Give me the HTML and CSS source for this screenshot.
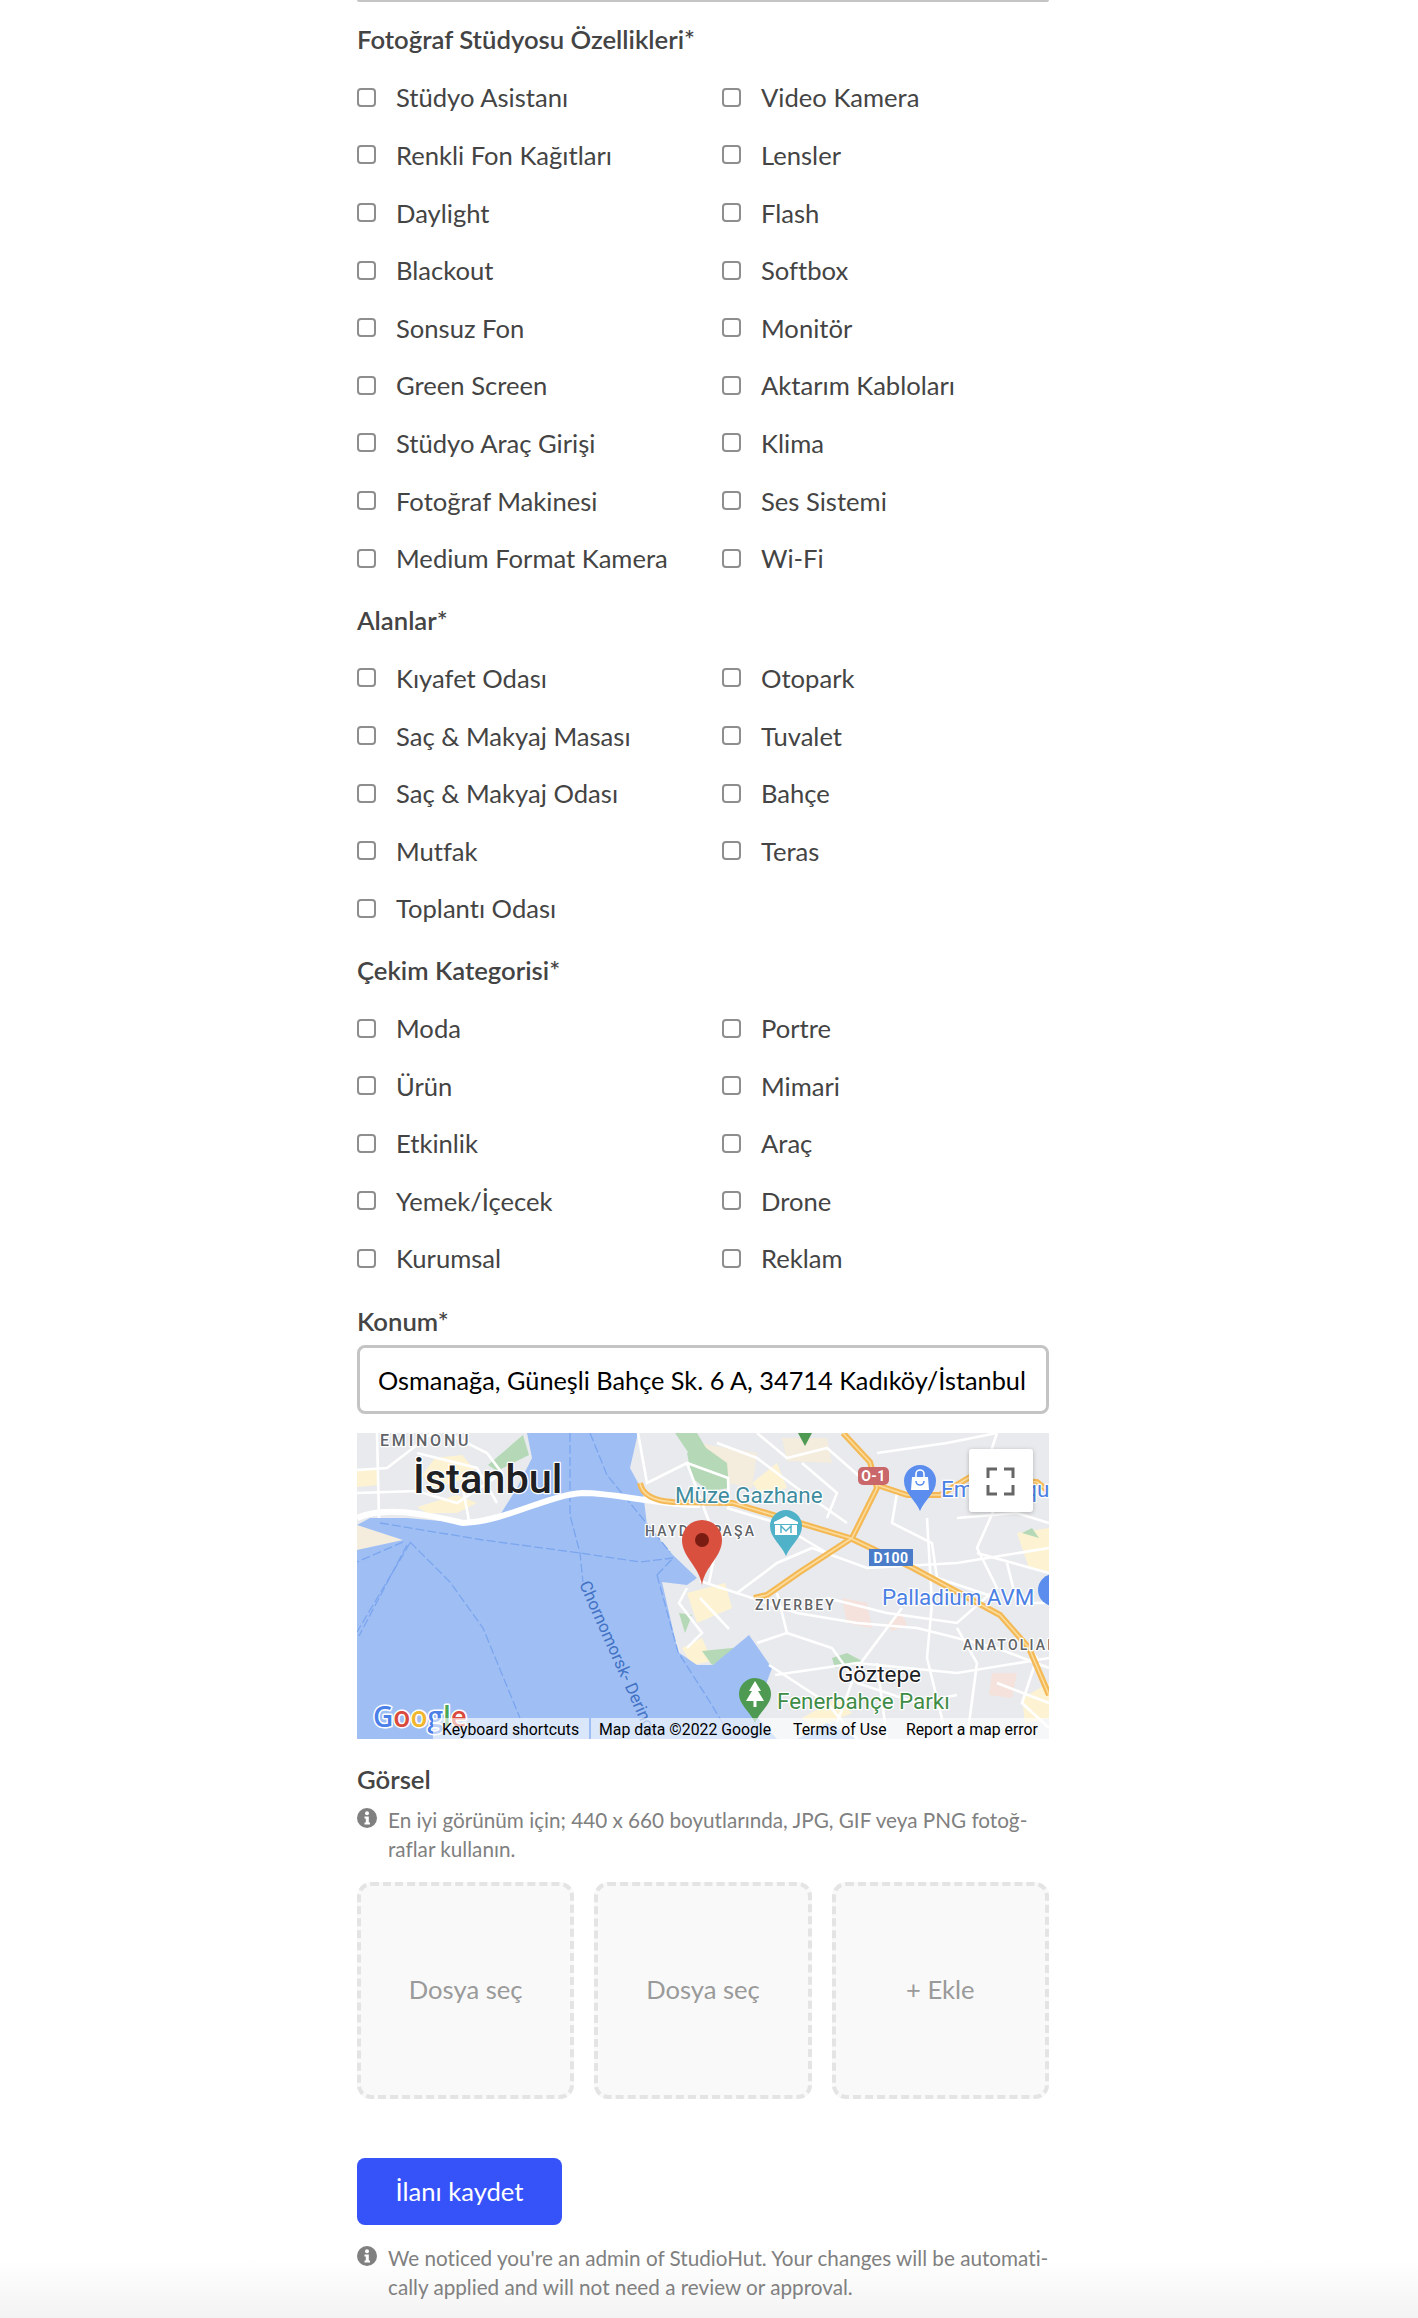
FILE: index.html
```html
<!DOCTYPE html>
<html lang="en">
<head>
  <meta charset="UTF-8">
  <meta name="viewport" content="width=device-width, initial-scale=1.0">
  <title>StudioHut - İlan düzenle</title>
  <link rel="stylesheet" href="styles.css">
</head>
<body>
  <form class="listing-form">
    <div class="top-field-edge"></div>

    <h3 class="group-title">Fotoğraf Stüdyosu Özellikleri*</h3>
    <div class="check-grid">
      <label class="check-item"><input type="checkbox">Stüdyo Asistanı</label>
      <label class="check-item"><input type="checkbox">Video Kamera</label>
      <label class="check-item"><input type="checkbox">Renkli Fon Kağıtları</label>
      <label class="check-item"><input type="checkbox">Lensler</label>
      <label class="check-item"><input type="checkbox">Daylight</label>
      <label class="check-item"><input type="checkbox">Flash</label>
      <label class="check-item"><input type="checkbox">Blackout</label>
      <label class="check-item"><input type="checkbox">Softbox</label>
      <label class="check-item"><input type="checkbox">Sonsuz Fon</label>
      <label class="check-item"><input type="checkbox">Monitör</label>
      <label class="check-item"><input type="checkbox">Green Screen</label>
      <label class="check-item"><input type="checkbox">Aktarım Kabloları</label>
      <label class="check-item"><input type="checkbox">Stüdyo Araç Girişi</label>
      <label class="check-item"><input type="checkbox">Klima</label>
      <label class="check-item"><input type="checkbox">Fotoğraf Makinesi</label>
      <label class="check-item"><input type="checkbox">Ses Sistemi</label>
      <label class="check-item"><input type="checkbox">Medium Format Kamera</label>
      <label class="check-item"><input type="checkbox">Wi-Fi</label>
    </div>

    <h3 class="group-title">Alanlar*</h3>
    <div class="check-grid">
      <label class="check-item"><input type="checkbox">Kıyafet Odası</label>
      <label class="check-item"><input type="checkbox">Otopark</label>
      <label class="check-item"><input type="checkbox">Saç &amp; Makyaj Masası</label>
      <label class="check-item"><input type="checkbox">Tuvalet</label>
      <label class="check-item"><input type="checkbox">Saç &amp; Makyaj Odası</label>
      <label class="check-item"><input type="checkbox">Bahçe</label>
      <label class="check-item"><input type="checkbox">Mutfak</label>
      <label class="check-item"><input type="checkbox">Teras</label>
      <label class="check-item"><input type="checkbox">Toplantı Odası</label>
    </div>

    <h3 class="group-title">Çekim Kategorisi*</h3>
    <div class="check-grid">
      <label class="check-item"><input type="checkbox">Moda</label>
      <label class="check-item"><input type="checkbox">Portre</label>
      <label class="check-item"><input type="checkbox">Ürün</label>
      <label class="check-item"><input type="checkbox">Mimari</label>
      <label class="check-item"><input type="checkbox">Etkinlik</label>
      <label class="check-item"><input type="checkbox">Araç</label>
      <label class="check-item"><input type="checkbox">Yemek/İçecek</label>
      <label class="check-item"><input type="checkbox">Drone</label>
      <label class="check-item"><input type="checkbox">Kurumsal</label>
      <label class="check-item"><input type="checkbox">Reklam</label>
    </div>

    <h3 class="group-title location-title">Konum*</h3>
    <input class="location-input" type="text" value="Osmanağa, Güneşli Bahçe Sk. 6 A, 34714 Kadıköy/İstanbul, Türkiye">

    <svg class="map" viewBox="0 0 692 306" role="img" aria-label="Harita">
      <rect class="land" width="692" height="306"/>
      <!-- beige built up areas -->
      <path class="urban" d="M65 42L78 25L105 22L122 42L95 50L75 55Z"/>
      <path class="urban" d="M0 38L22 36L22 52L0 54Z"/>
      <path class="urban" d="M60 74L100 62L120 70L100 80L70 80Z"/>
      <path class="sand" d="M0 92L46 107L0 117Z"/>
      <path class="urban" d="M330 160L368 150L375 175L340 190Z"/>
      <path class="urban" d="M325 215L345 205L355 228L335 232Z"/>
      <path class="urban" d="M395 50L420 30L430 55L405 62Z"/>
      <path class="urban" d="M660 100L692 95L692 140L672 135Z"/>
      <path class="urban" d="M665 265L692 250L692 285L668 290Z"/>
      <path class="urban" d="M445 285L480 265L495 280L460 295Z"/>
      <path class="sand" d="M340 10L400 20L395 55L345 45Z"/>
      <path class="sand" d="M425 5L470 5L475 30L430 28Z"/>
      <path class="pink" d="M485 165L510 170L515 195L490 190Z"/>
      <path class="pink" d="M635 240L660 240L655 265L632 262Z"/>
      <path class="pink" d="M530 190L545 180L550 192L535 198Z"/>
      <path class="park" d="M131 32L166 2L172 22L140 38Z"/>
      <path class="park" d="M330 20L345 12L370 30L372 55L352 58L335 45Z"/>
      <path class="park" d="M318 0L340 0L352 20L335 25Z"/>
      <path class="park" d="M475 225L490 220L505 228L478 235Z"/>
      <path class="park" d="M345 218L385 214L398 224L355 232Z"/>
      <path class="park" d="M322 180L335 182L328 200Z"/>
      <path class="park" d="M665 100L675 95L682 105Z"/>
      <!-- sea -->
      <path class="water" d="M170 0L281 0L273 35L286 59L290 92L316 122L340 145L330 152L305 149L321 219L340 232L356 232L380 212L392 202L415 235L405 262L401 285L420 306L0 306L0 117L46 107L0 92L13 85L50 85L106 90L143 82L160 55L175 25Z"/>
      <path class="water" d="M440 306L470 290L500 306Z"/>
      <!-- ferry and ship routes -->
      <g class="route">
        <path d="M23 90L126 107L223 120L283 129L316 125"/>
        <path d="M213 0L213 82L223 120L226 149"/>
        <path d="M233 0L250 42L313 119"/>
        <path d="M53 109L93 149L126 195L163 285"/>
        <path d="M53 110L0 199"/>
        <path d="M50 112L2 203"/>
        <path d="M46 109L0 129"/>
        <path d="M300 142L321 219L353 269L375 306"/>
        <path d="M300 142L316 125"/>
      </g>
      <!-- streets -->
      <g class="street">
        <path d="M0 37L30 35L60 12L75 0"/>
        <path d="M0 60L60 58L100 70L145 40L130 20L90 0"/>
        <path d="M20 0L22 85"/>
        <path d="M105 50L112 88"/>
        <path d="M60 20L120 35L140 70"/>
        <path d="M281 0L290 50L330 30L371 45L372 75"/>
        <path d="M330 30L348 78L360 110L352 150"/>
        <path d="M343 148L380 160L420 130L455 115L510 135L600 130L692 115"/>
        <path d="M370 75L420 90L470 120"/>
        <path d="M360 10L400 25L440 55L490 90"/>
        <path d="M400 0L430 25L470 15L510 50"/>
        <path d="M540 60L535 90L575 110L580 145L640 165"/>
        <path d="M570 85L575 170L570 225L590 306"/>
        <path d="M640 70L620 115L640 155L600 190L530 180L470 165"/>
        <path d="M343 165L372 196"/>
        <path d="M412 232L470 270L500 306"/>
        <path d="M380 160L440 180L500 190L560 195L640 215L692 235"/>
        <path d="M545 175L500 235L480 290"/>
        <path d="M418 242L500 230L600 240L692 225"/>
        <path d="M600 195L620 230L610 306"/>
        <path d="M650 190L680 225L665 270L692 295"/>
        <path d="M330 155L322 170L345 200L330 215"/>
        <path d="M430 200L475 215L500 250L560 270L600 262"/>
        <path d="M640 0L630 30L692 60"/>
        <path d="M692 170L660 170L650 130"/>
        <path d="M445 30L480 60L470 85"/>
        <path d="M520 20L590 10L640 0"/>
        <path d="M600 85L660 80L692 90"/>
        <path d="M420 160L430 200L400 210"/>
        <path d="M620 120L692 140"/>
        <path d="M520 230L530 306"/>
        <path d="M640 250L692 270"/>
      </g>
      <path class="bridge" d="M0 85C30 72 70 82 106 90C150 88 190 62 226 60C260 60 300 72 343 72"/>
      <g class="highway-base">
        <path d="M283 50C285 62 298 68 316 69L376 70L493 105L556 135L643 182L672 215L692 262"/>
        <path d="M486 0L513 29L520 55L495 105L443 139L410 162L397 165"/>
        <path d="M520 52L550 62L583 62L613 44L680 49L692 59"/>
      </g>
      <g class="highway-core">
        <path d="M283 50C285 62 298 68 316 69L376 70L493 105L556 135L643 182L672 215L692 262"/>
        <path d="M486 0L513 29L520 55L495 105L443 139L410 162L397 165"/>
        <path d="M520 52L550 62L583 62L613 44L680 49L692 59"/>
      </g>
      <!-- place names -->
      <text class="lbl-area lbl-eminonu" x="23" y="13">EMINONU</text>
      <text class="lbl-city" x="56" y="60">İstanbul</text>
      <text class="lbl-poi teal" x="318" y="70">Müze Gazhane</text>
      <text class="lbl-area" x="288" y="103">HAYDARPAŞA</text>
      <text class="lbl-area" x="398" y="177">ZIVERBEY</text>
      <text class="lbl-area" x="606" y="217">ANATOLIAN</text>
      <text class="lbl-poi blue" x="525" y="172">Palladium AVM</text>
      <text class="lbl-poi blue" x="584" y="64">Emaar Square</text>
      <text class="lbl-town" x="481" y="249">Göztepe</text>
      <text class="lbl-poi green" x="420" y="276">Fenerbahçe Parkı</text>
      <text class="lbl-channel" transform="translate(222 151) rotate(66)">Chornomorsk- Derince</text>
      <!-- road shields -->
      <rect class="shield-red" x="501" y="34" width="31" height="18" rx="5"/>
      <text class="shield-text" x="516.5" y="48">O-1</text>
      <rect class="shield-blue" x="512" y="116" width="44" height="17"/>
      <text class="shield-text" x="534" y="130">D100</text>
      <!-- markers -->
      <path class="pin-green" d="M441 0H455L448 13Z"/>
      <path class="pin-blue" d="M563 78C558 66 547 60 547 48A16 16 0 0 1 579 48C579 60 568 66 563 78Z"/>
      <path class="pin-white" d="M555 44H571L572 57H554Z"/>
      <path class="pin-handle" d="M559 44V41A4 4 0 0 1 567 41V44"/>
      <path class="pin-smile" d="M559 48A4 4 0 0 0 567 48"/>
      <path class="pin-teal" d="M429 123C424 111 413 105 413 93A16 16 0 0 1 445 93C445 105 434 111 429 123Z"/>
      <path class="pin-white" d="M429 83L441 89V91H417V89ZM418 92H440V102H418Z"/>
      <path class="pin-m" d="M424 100V93L429 98L434 93V100"/>
      <path class="pin-tree" d="M398 290C393 278 382 272 382 261A16 16 0 0 1 414 261C414 272 403 278 398 290Z"/>
      <path class="pin-white" d="M398 248L404 258H401L407 268H399.5V274H396.5V268H389L395 258H392Z"/>
      <circle class="pin-blue" cx="697" cy="157" r="16"/>
      <path class="pin-red" d="M345 152C342 133 325 124 325 107A20 20 0 0 1 365 107C365 124 348 133 345 152Z"/>
      <circle class="pin-dot" cx="345" cy="107" r="7"/>
      <!-- google logo -->
      <text class="google-logo" x="16" y="294"><tspan class="g-blue">G</tspan><tspan class="g-red">o</tspan><tspan class="g-yellow">o</tspan><tspan class="g-blue">g</tspan><tspan class="g-green">l</tspan><tspan class="g-red">e</tspan></text>
      <!-- attribution -->
      <rect class="attr-bar" x="76" y="285" width="156" height="21"/>
      <rect class="attr-bar" x="234" y="285" width="458" height="21"/>
      <text class="attr-text" x="85" y="302">Keyboard shortcuts</text>
      <text class="attr-text" x="242" y="302">Map data ©2022 Google</text>
      <text class="attr-text" x="436" y="302">Terms of Use</text>
      <text class="attr-text" x="549" y="302">Report a map error</text>
      <!-- fullscreen control -->
      <rect class="fs-button" x="612" y="16" width="64" height="63" rx="3"/>
      <path class="fs-icon" d="M631 45V36H640M647 36H656V45M656 52V61H647M640 61H631V52"/>
    </svg>

    <h3 class="group-title image-title">Görsel</h3>
    <p class="hint">
      <svg class="hint-icon" viewBox="0 0 20 20"><circle cx="10" cy="10" r="10"/><circle class="hint-i" cx="10" cy="5.2" r="2"/><path class="hint-i" d="M7.5 8.5H11.8V14.5H13V16.4H7.5V14.5H8.8V10.4H7.5Z"/></svg>
      <span>En iyi görünüm için; 440 x 660 boyutlarında, JPG, GIF veya PNG fotoğ-<br>raflar kullanın.</span>
    </p>

    <div class="upload-row">
      <div class="upload-tile">Dosya seç</div>
      <div class="upload-tile">Dosya seç</div>
      <div class="upload-tile">+ Ekle</div>
    </div>

    <button class="save-button" type="button">İlanı kaydet</button>

    <p class="hint admin-hint">
      <svg class="hint-icon" viewBox="0 0 20 20"><circle cx="10" cy="10" r="10"/><circle class="hint-i" cx="10" cy="5.2" r="2"/><path class="hint-i" d="M7.5 8.5H11.8V14.5H13V16.4H7.5V14.5H8.8V10.4H7.5Z"/></svg>
      <span>We noticed you're an admin of StudioHut. Your changes will be automati-<br>cally applied and will not need a review or approval.</span>
    </p>
  </form>
</body>
</html>
```

FILE: styles.css
```css
html {
  height: 100%;
}
body {
  margin: 0;
  font-family: 'Lato', 'Liberation Sans', sans-serif;
  font-variant-ligatures: none;
  color: #444;
  background: linear-gradient(to bottom, #fff calc(100% - 58px), #f3f3f3 100%);
}
.listing-form {
  width: 692px;
  margin: 0 0 0 357px;
  padding-bottom: 15px;
}
.top-field-edge {
  height: 2px;
  background: #c4c4c4;
  border-radius: 0 0 6px 6px;
  margin-bottom: 9px;
}
.group-title {
  margin: 4.6px 0 0;
  height: 57.6px;
  line-height: 57.6px;
  font-size: 25.7px;
  font-weight: 600;
  color: #444;
}
.check-grid {
  display: grid;
  grid-template-columns: 365px 1fr;
  grid-auto-rows: 57.6px;
}
.check-item {
  display: flex;
  align-items: center;
  font-size: 25.6px;
  color: #444;
}
.check-item input {
  appearance: none;
  box-sizing: border-box;
  width: 19px;
  height: 19px;
  margin: 0 20px 0 0;
  background: #fff;
  border: 2px solid #8e8e8e;
  border-radius: 4px;
}
.location-title {
  height: 48px;
  line-height: 48px;
  margin-top: 10px;
}
.location-input {
  display: block;
  box-sizing: border-box;
  width: 100%;
  height: 69px;
  padding: 0 21px 0 18px;
  font-family: inherit;
  font-variant-ligatures: none;
  font-size: 25.3px;
  color: #000;
  background: #fff;
  border: 3px solid #c4c4c4;
  border-radius: 8px;
  outline: none;
}

/* map */
.map {
  display: block;
  width: 692px;
  height: 306px;
  margin-top: 19px;
  overflow: hidden;
  font-family: 'Roboto', sans-serif;
}
.land { fill: #e8eaed; }
.urban { fill: #fdf3d2; }
.sand { fill: #f4ecdc; }
.pink { fill: #f6e2dc; }
.park { fill: #b5d9b6; }
.water { fill: #9fbff4; }
.route path {
  fill: none;
  stroke: #7ba5ee;
  stroke-width: 1.3;
  stroke-dasharray: 9 3;
}
.street path {
  fill: none;
  stroke: #fff;
  stroke-width: 2.6;
}
.bridge {
  fill: none;
  stroke: #fff;
  stroke-width: 6;
}
.highway-base path {
  fill: none;
  stroke: #f4b955;
  stroke-width: 6;
  stroke-linejoin: round;
}
.highway-core path {
  fill: none;
  stroke: #fbdc9d;
  stroke-width: 1.6;
  stroke-linejoin: round;
}
.map text {
  paint-order: stroke;
  stroke: #fff;
  stroke-width: 2.5px;
  stroke-linejoin: round;
}
.lbl-area {
  font-size: 14px;
  font-weight: 500;
  letter-spacing: 2.2px;
  fill: #5f6368;
}
.lbl-eminonu {
  font-size: 16px;
  letter-spacing: 2.8px;
}
.lbl-city {
  font-size: 41.5px;
  font-weight: 500;
  fill: #202124;
}
.lbl-town {
  font-size: 22.5px;
  fill: #202124;
}
.lbl-poi { font-size: 22.4px; }
.teal { fill: #3e8c9e; }
.blue { fill: #4b80e4; }
.green { fill: #3f8c47; }
.map .lbl-channel {
  font-size: 17px;
  fill: #4272c4;
  stroke: #9fbff4;
  stroke-width: 1px;
}
.shield-red { fill: #c9676a; }
.shield-blue { fill: #4a7cc9; }
.map .shield-text {
  font-size: 14px;
  font-weight: 700;
  letter-spacing: 0.5px;
  text-anchor: middle;
  fill: #fff;
  stroke: none;
}
.pin-green, .pin-tree { fill: #4e9a53; }
.pin-blue { fill: #5a8dee; }
.pin-teal { fill: #4fb2c8; }
.pin-white { fill: #fff; }
.pin-handle {
  fill: none;
  stroke: #fff;
  stroke-width: 1.6;
}
.pin-smile {
  fill: none;
  stroke: #5a8dee;
  stroke-width: 1.6;
}
.pin-m {
  fill: none;
  stroke: #4fb2c8;
  stroke-width: 1.5;
}
.pin-red { fill: #d9503f; }
.pin-dot { fill: #7a1c12; }
.map .google-logo {
  font-family: 'Open Sans', sans-serif;
  font-size: 28px;
  font-weight: 600;
  stroke-width: 3px;
}
.g-blue { fill: #4a80e8; }
.g-red { fill: #d9493c; }
.g-yellow { fill: #f0b62e; }
.g-green { fill: #4ba658; }
.attr-bar { fill: rgba(255, 255, 255, 0.62); }
.map .attr-text {
  font-size: 15.8px;
  fill: #000;
  stroke: none;
}
.fs-button {
  fill: #fff;
  filter: drop-shadow(0 1px 2px rgba(0, 0, 0, 0.25));
}
.fs-icon {
  fill: none;
  stroke: #666;
  stroke-width: 3;
}

/* images */
.image-title {
  margin-top: 12px;
}
.hint {
  display: flex;
  gap: 11px;
  margin: -2.5px 0 0;
  font-size: 20.7px;
  line-height: 29px;
  color: #808080;
  white-space: nowrap;
}
.hint-icon {
  flex: none;
  width: 20px;
  height: 20px;
  margin-top: 2px;
  fill: #808080;
}
.hint-i { fill: #fff; }
.upload-row {
  display: grid;
  grid-template-columns: repeat(3, 1fr);
  gap: 20px;
  margin-top: 17.5px;
}
.upload-tile {
  box-sizing: border-box;
  height: 217px;
  padding-bottom: 3px;
  display: flex;
  align-items: center;
  justify-content: center;
  font-size: 25.6px;
  color: #9a9a9a;
  background: #f9f9f9;
  border: 4px dashed #e4e4e4;
  border-radius: 14px;
}
.save-button {
  display: block;
  width: 205px;
  height: 67px;
  margin-top: 59px;
  font-family: inherit;
  font-variant-ligatures: none;
  font-size: 25.6px;
  color: #fff;
  background: #3652f9;
  border: none;
  border-radius: 8px;
}
.admin-hint {
  margin-top: 19.5px;
}
```
